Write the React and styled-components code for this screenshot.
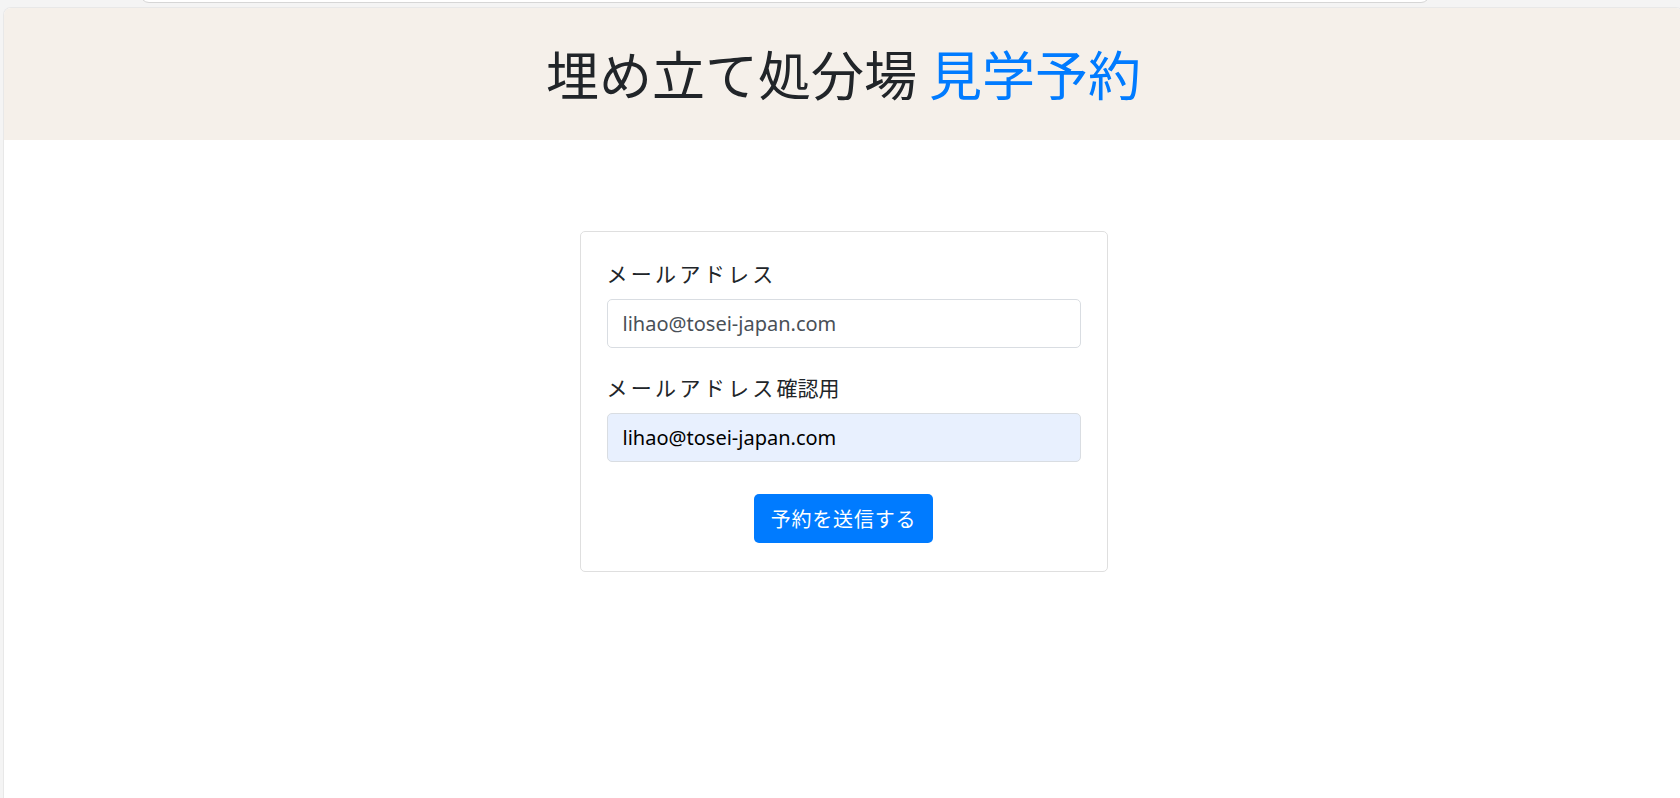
import styled, { createGlobalStyle } from 'styled-components';

const GlobalStyle = createGlobalStyle`
  html, body {
    margin: 0;
    padding: 0;
    height: 100%;
    overflow: hidden;
    background: #f4f4f4;
  }
  #root {
    height: 100%;
  }
  * {
    box-sizing: border-box;
  }
`;

const FONT = `"Noto Sans", "Noto Sans CJK JP", sans-serif`;

const Screen = styled.div`
  height: 100%;
  display: flex;
  flex-direction: column;
  font-family: ${FONT};
  color: #212529;
`;

const TopStrip = styled.div`
  height: 7px;
  flex: none;
  padding-left: 140px;
  overflow: hidden;
`;

const AddressBar = styled.div`
  width: 1290px;
  height: 12px;
  margin-top: -9px;
  background: #ffffff;
  border: 1px solid #d6d6d6;
  border-radius: 0 0 9px 9px;
`;

const Frame = styled.div`
  flex: 1;
  margin-left: 3px;
  margin-right: -4px;
  background: #ffffff;
  border: 1px solid #e8e8e8;
  border-bottom: none;
  border-radius: 8px 8px 0 0;
  overflow: hidden;
  display: flex;
  flex-direction: column;
`;

const Header = styled.header`
  height: 132px;
  background: #f5f0ea;
  display: flex;
  align-items: center;
  justify-content: center;
`;

const Title = styled.h1`
  margin: 0;
  font-family: "Noto Sans CJK JP", sans-serif;
  font-size: 53px;
  font-weight: 400;
  line-height: 1.2;
  color: #212529;
`;

const Accent = styled.span`
  color: #007bff;
`;

const Main = styled.main`
  display: flex;
  justify-content: center;
  padding-top: 91px;
`;

const Card = styled.form`
  width: 528px;
  border: 1px solid #dfdfdf;
  border-radius: 5px;
  padding: 26px 26px 28px;
  display: flex;
  flex-direction: column;
`;

const Group = styled.div`
  display: flex;
  flex-direction: column;
  margin-bottom: ${p => p.$gap}px;
`;

const Label = styled.label`
  font-family: "Noto Sans CJK JP", sans-serif;
  font-size: 21px;
  letter-spacing: 3.3px;
  line-height: 30px;
  color: #212529;
  margin-bottom: 11px;
`;

const Kanji = styled.span`
  letter-spacing: 0;
`;

const Input = styled.input`
  height: 49px;
  width: 100%;
  padding: 0 15px;
  font-family: ${FONT};
  font-size: 20px;
  color: ${p => (p.$filled ? '#000000' : '#495057')};
  background: ${p => (p.$filled ? '#e8f0fe' : '#ffffff')};
  border: 1px solid #d9dde2;
  border-radius: 5px;
  outline: none;
`;

const Actions = styled.div`
  display: flex;
  justify-content: center;
`;

const SubmitButton = styled.button`
  height: 49px;
  padding: 0 17px;
  background: #007bff;
  color: #ffffff;
  border: none;
  border-radius: 5px;
  font-family: "Noto Sans CJK JP", sans-serif;
  font-size: 20px;
  letter-spacing: 0.8px;
  cursor: pointer;
`;

const App = () => {
  return (
    <>
      <GlobalStyle />
      <Screen>
        <TopStrip>
          <AddressBar />
        </TopStrip>
        <Frame>
          <Header>
            <Title>
              埋め立て処分場 <Accent>見学予約</Accent>
            </Title>
          </Header>
          <Main>
            <Card onSubmit={e => e.preventDefault()}>
              <Group $gap={24}>
                <Label htmlFor="email">メールアドレス</Label>
                <Input id="email" type="email" defaultValue="lihao@tosei-japan.com" />
              </Group>
              <Group $gap={32}>
                <Label htmlFor="email-confirm">
                  メールアドレス<Kanji>確認用</Kanji>
                </Label>
                <Input id="email-confirm" type="email" $filled defaultValue="lihao@tosei-japan.com" />
              </Group>
              <Actions>
                <SubmitButton type="submit">予約を送信する</SubmitButton>
              </Actions>
            </Card>
          </Main>
        </Frame>
      </Screen>
    </>
  );
};

export default App;
